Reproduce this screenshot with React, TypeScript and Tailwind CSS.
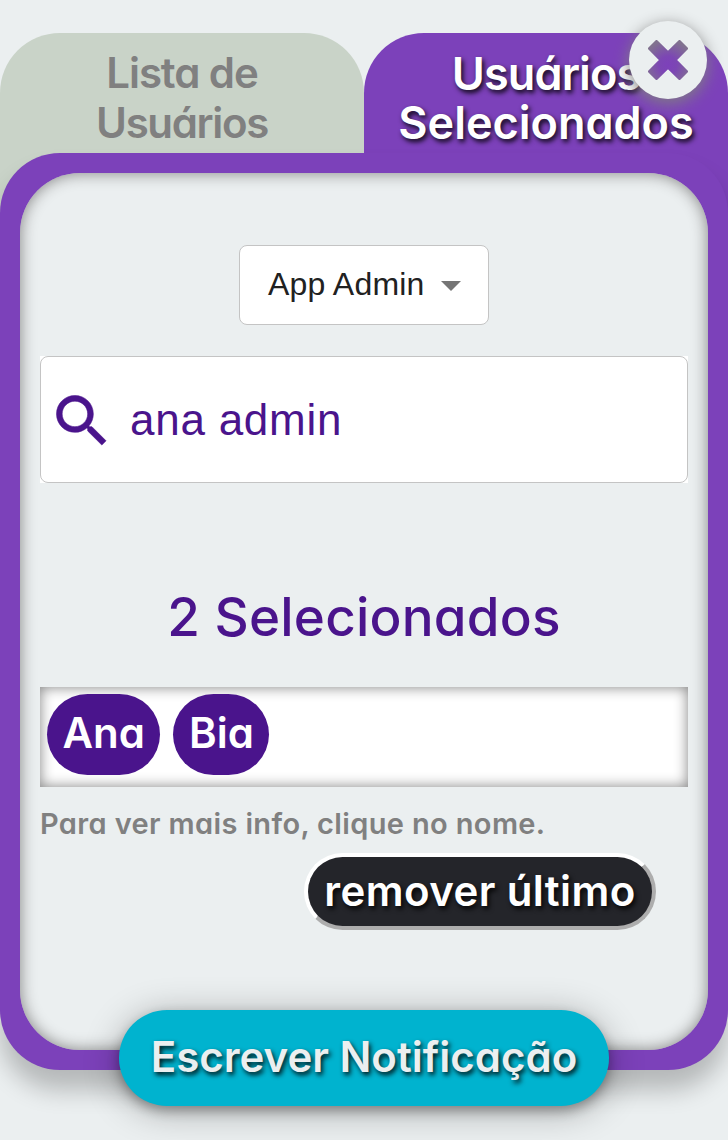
const CloseButton = () => (
  <button
    aria-label="Fechar"
    className="absolute left-[629px] top-[21px] z-20 flex size-[78px] items-center justify-center rounded-full bg-[#ebeff0] shadow-[0_4px_16px_#808080]"
  >
    <svg width="40" height="40" viewBox="0 0 40 40" aria-hidden="true">
      <defs>
        <radialGradient id="cross" gradientUnits="userSpaceOnUse" cx="20" cy="25" r="25">
          <stop offset="0" stopColor="#7d41ba" />
          <stop offset="0.35" stopColor="#7c46b4" />
          <stop offset="1" stopColor="#81728f" />
        </radialGradient>
      </defs>
      <path
        fill="url(#cross)"
        stroke="url(#cross)"
        strokeWidth="3"
        strokeLinejoin="round"
        d="M20 12.9L31.5 1.5L38.5 8.5L27.1 20L38.5 31.5L31.5 38.5L20 27.1L8.5 38.5L1.5 31.5L12.9 20L1.5 8.5L8.5 1.5Z"
      />
    </svg>
  </button>
);

const Tabs = () => (
  <div className="flex h-[180px] text-center">
    <div className="flex w-[364px] flex-col items-center rounded-t-[60px] bg-[#c9d3c8] pt-[15px] text-[42px] font-semibold leading-[50px] text-[#808080]">
      <span className="tracking-[-1.1px]">Lista de</span>
      <span className="tracking-[-1.35px]">Usuários</span>
    </div>
    <div className="flex w-[364px] flex-col items-center rounded-t-[60px] bg-[#7c41ba] pt-[16px] text-[45px] font-semibold leading-[49px] text-white [text-shadow:2px_3px_5px_rgba(0,0,0,0.9)]">
      <span className="tracking-[-0.9px]">Usuários</span>
      <span>Selecionados</span>
    </div>
  </div>
);

const Chip = ({ name }: { name: string }) => (
  <span className="flex h-[81px] items-center rounded-[41px] bg-[#4a148c] px-[15.5px] pb-[4px] text-[42px] font-semibold text-white">
    {name}
  </span>
);

export default function App() {
  return (
    <div className="relative h-[1140px] w-[728px] overflow-hidden bg-[#ebeff0] pt-[33px] font-['Inter',sans-serif] [font-feature-settings:'cv11']">
      <Tabs />
      <CloseButton />
      <div className="relative -mt-[60px] h-[917px] rounded-[60px] bg-[#7c41ba] p-5 shadow-[0_20px_25px_rgba(0,0,0,0.23)]">
        <div className="flex h-[877px] flex-col rounded-[60px] bg-[#ebeff0] px-5 pt-[72px] shadow-[inset_0_0_16px_#808080]">
          <div className="flex h-[80px] w-[250px] items-center self-center rounded-[8px] border border-[#c4c4c4] bg-white pb-[2px] pl-[28px] font-['Liberation_Sans',Arial,sans-serif] text-[32px] text-[#212121]">
            <span className="whitespace-nowrap tracking-[0.2px]">App Admin</span>
            <svg className="ml-[16px] mt-[3px]" width="20" height="10" viewBox="0 0 20 10" aria-hidden="true">
              <path d="M0 0h20L10 10z" fill="#757575" />
            </svg>
          </div>
          <div className="mt-[31px] bg-white">
            <div className="flex h-[127px] items-center rounded-[8px] border border-[#c4c4c4] pl-[7px] font-['Liberation_Sans',Arial,sans-serif] text-[44px] tracking-[0.75px] text-[#4a148c]">
              <svg className="mt-[2px]" width="68" height="68" viewBox="0 0 24 24" fill="currentColor" stroke="currentColor" strokeWidth="0.2" aria-hidden="true">
                <path d="M15.5 14h-.79l-.28-.27C15.41 12.59 16 11.11 16 9.5 16 5.91 13.09 3 9.5 3S3 5.91 3 9.5 5.91 16 9.5 16c1.61 0 3.09-.59 4.23-1.57l.27.28v.79l5 4.99L20.49 19l-4.99-5zm-6 0C7.01 14 5 11.99 5 9.5S7.01 5 9.5 5 14 7.01 14 9.5 11.99 14 9.5 14z" />
              </svg>
              <span className="ml-[14px]">ana admin</span>
            </div>
          </div>
          <h2 className="mt-[94px] text-center text-[53px] font-medium leading-[80px] tracking-[0.2px] text-[#4a148c]">
            2 Selecionados
          </h2>
          <div className="mt-[30px] flex h-[100px] gap-[13px] bg-white pl-[7px] pt-[7px] shadow-[inset_0_0_14px_#808080]">
            <Chip name="Ana" />
            <Chip name="Bia" />
          </div>
          <p className="mt-[16px] whitespace-nowrap text-[29px] font-semibold leading-[42px] tracking-[0.36px] text-[#808080]">
            Para ver mais info, clique no nome.
          </p>
          <button className="mr-[32px] mt-[8px] flex h-[77px] w-[352px] items-center justify-center self-end whitespace-nowrap rounded-[39px] border-4 border-b-[#adadad] border-l-white border-r-[#adadad] border-t-white bg-[#24252a] pb-[2px] text-[42px] font-semibold tracking-[0.4px] text-white [text-shadow:2px_3px_5px_rgba(0,0,0,0.9)]">
            remover último
          </button>
        </div>
      </div>
      <button className="relative mx-auto -mt-[60px] flex h-[96px] w-[490px] items-center justify-center whitespace-nowrap rounded-[48px] bg-[#00b3cf] pb-[4px] text-[42px] font-semibold text-[#ebeff0] shadow-[0_5px_12px_rgba(0,0,0,0.3),0_5px_36px_rgba(0,0,0,0.3)] [text-shadow:2px_3px_5px_rgba(0,0,0,0.9)]">
        Escrever Notificação
      </button>
    </div>
  );
}
